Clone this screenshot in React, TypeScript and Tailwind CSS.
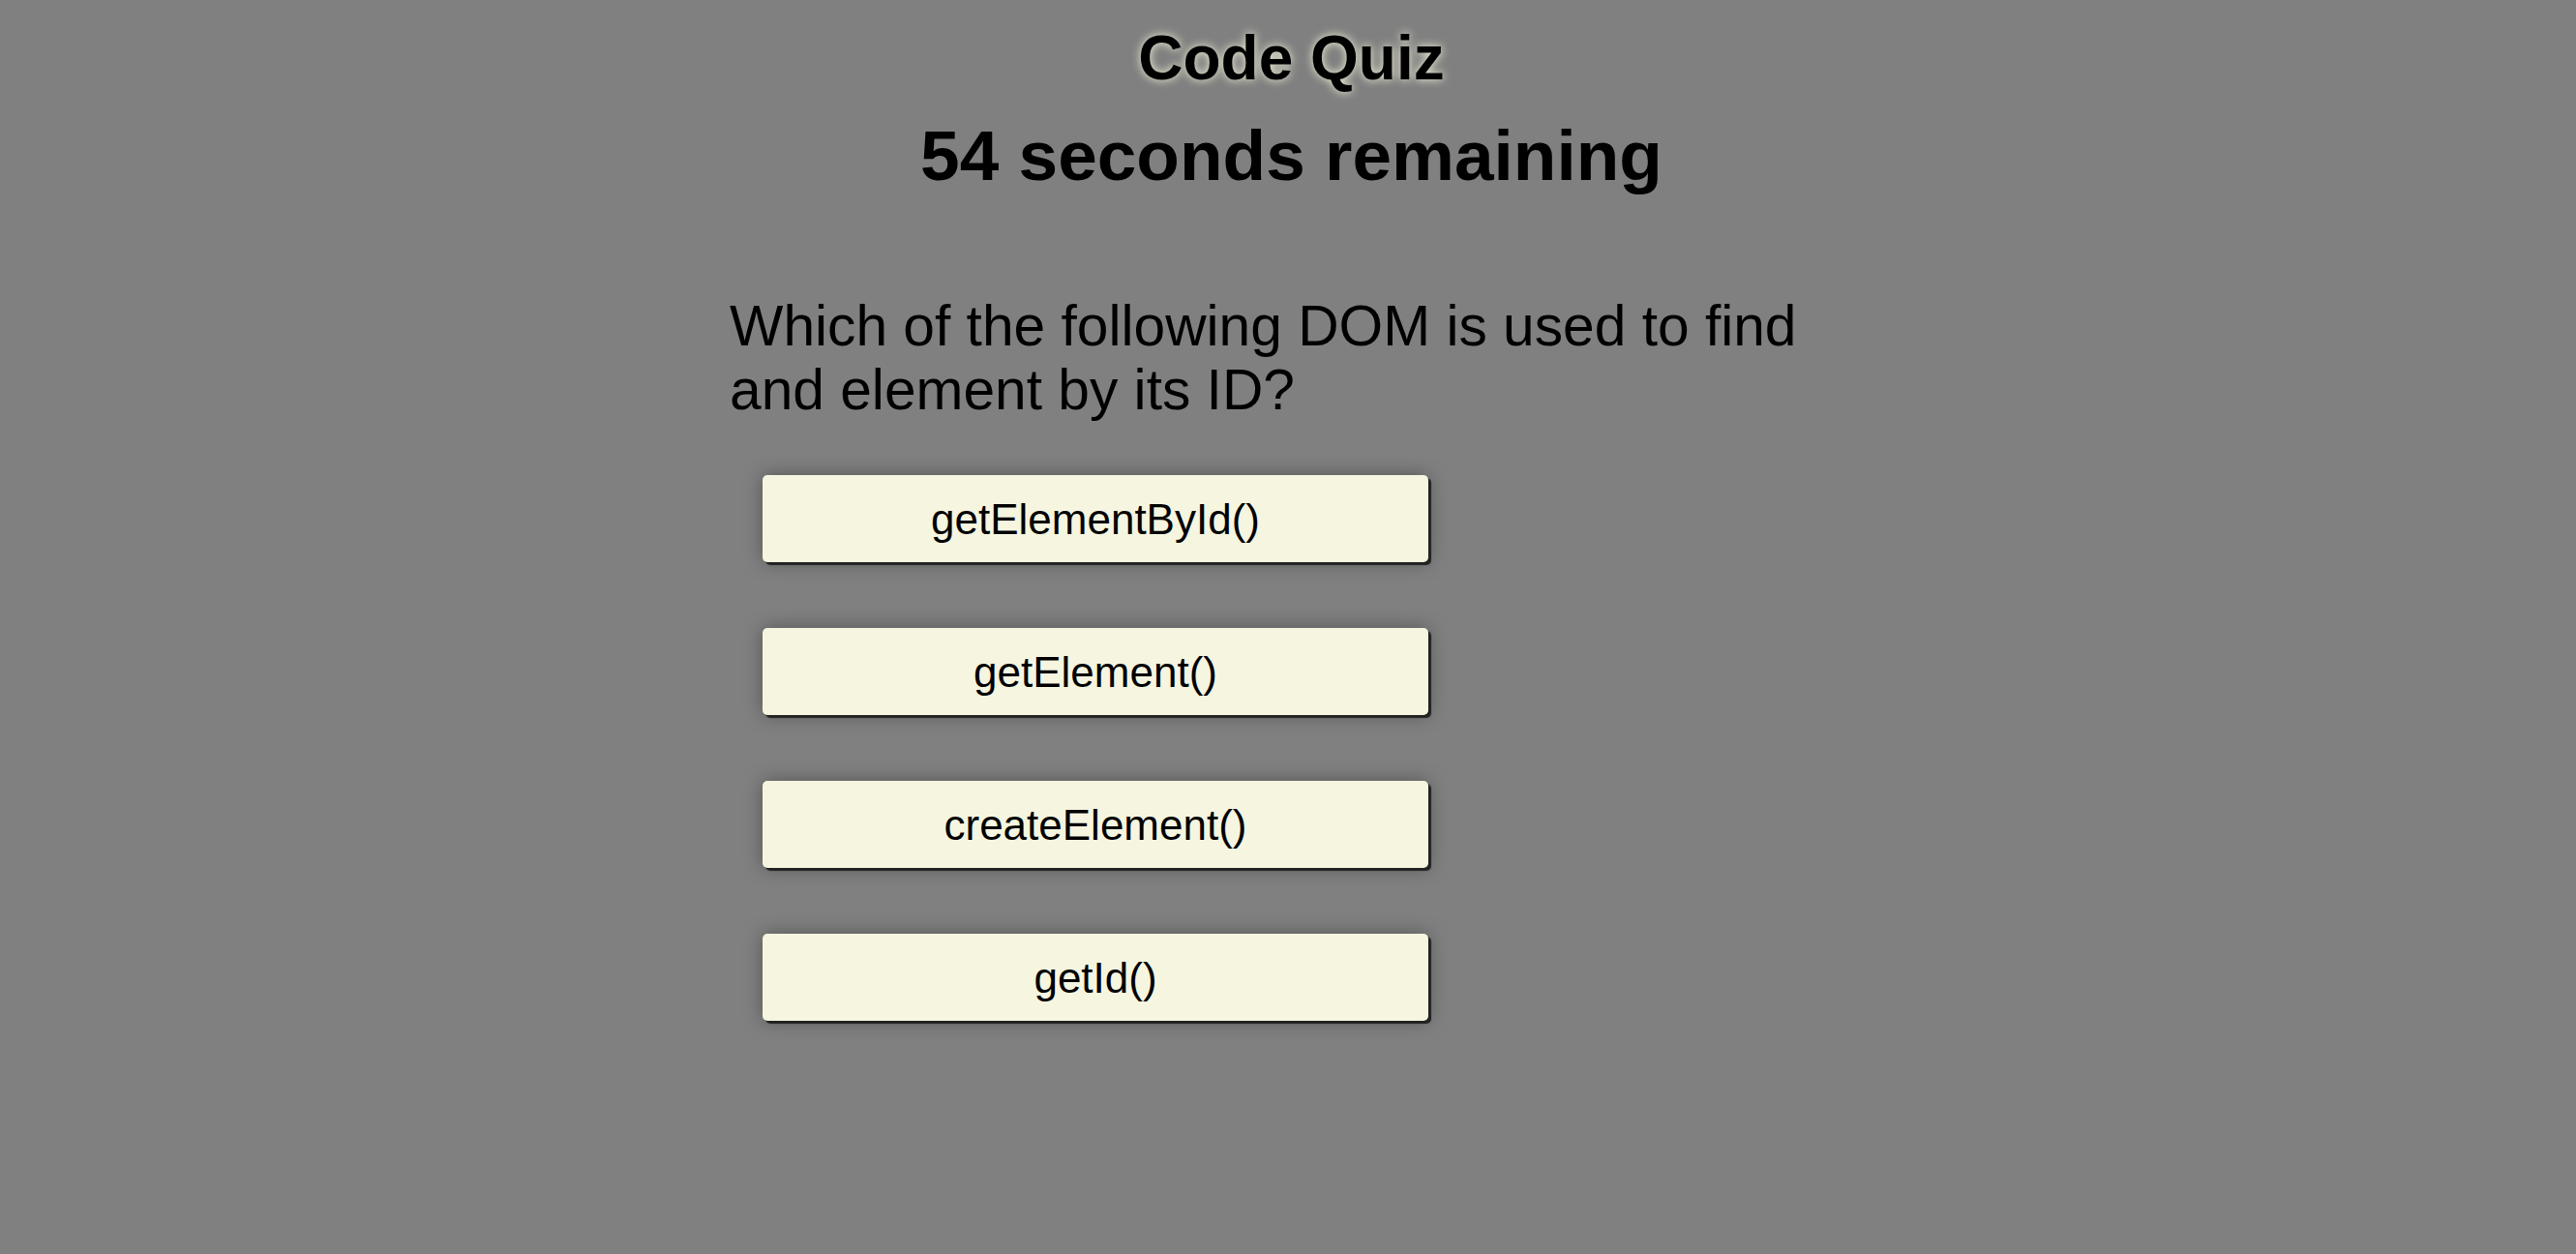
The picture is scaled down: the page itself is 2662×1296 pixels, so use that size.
import React from 'react';

const choices = ['getElementById()', 'getElement()', 'createElement()', 'getId()'];

export default function App() {
  return (
    <div className="min-h-screen w-full bg-[#808080] text-black font-['Liberation_Sans',Arial,sans-serif]">
      <header className="flex flex-col items-center pt-[25px] pl-[7px]">
        <h1 className="text-[64px] font-bold leading-[1.117] [text-shadow:0_0_10px_#f5f5dc]">Code Quiz</h1>
        <h2 className="mt-[24px] text-[73px] font-bold leading-[1.117]">54 seconds remaining</h2>
      </header>

      <main className="mx-auto mt-[102px] w-[1154px]">
        <p className="text-[58.7px] leading-[1.117]">
          Which of the following DOM is used to find and element by its ID?
        </p>
        <div className="mt-[56px] ml-[34px] flex flex-col gap-[68px]">
          {choices.map((choice) => (
            <button
              key={choice}
              className="h-[90px] w-[688px] rounded-[5px] bg-[#f5f5e0] text-[44px] leading-[1.117] text-black shadow-[3px_3px_1px_#222,0_0_20px_rgba(0,0,0,0.35)]"
            >
              {choice}
            </button>
          ))}
        </div>
      </main>
    </div>
  );
}
